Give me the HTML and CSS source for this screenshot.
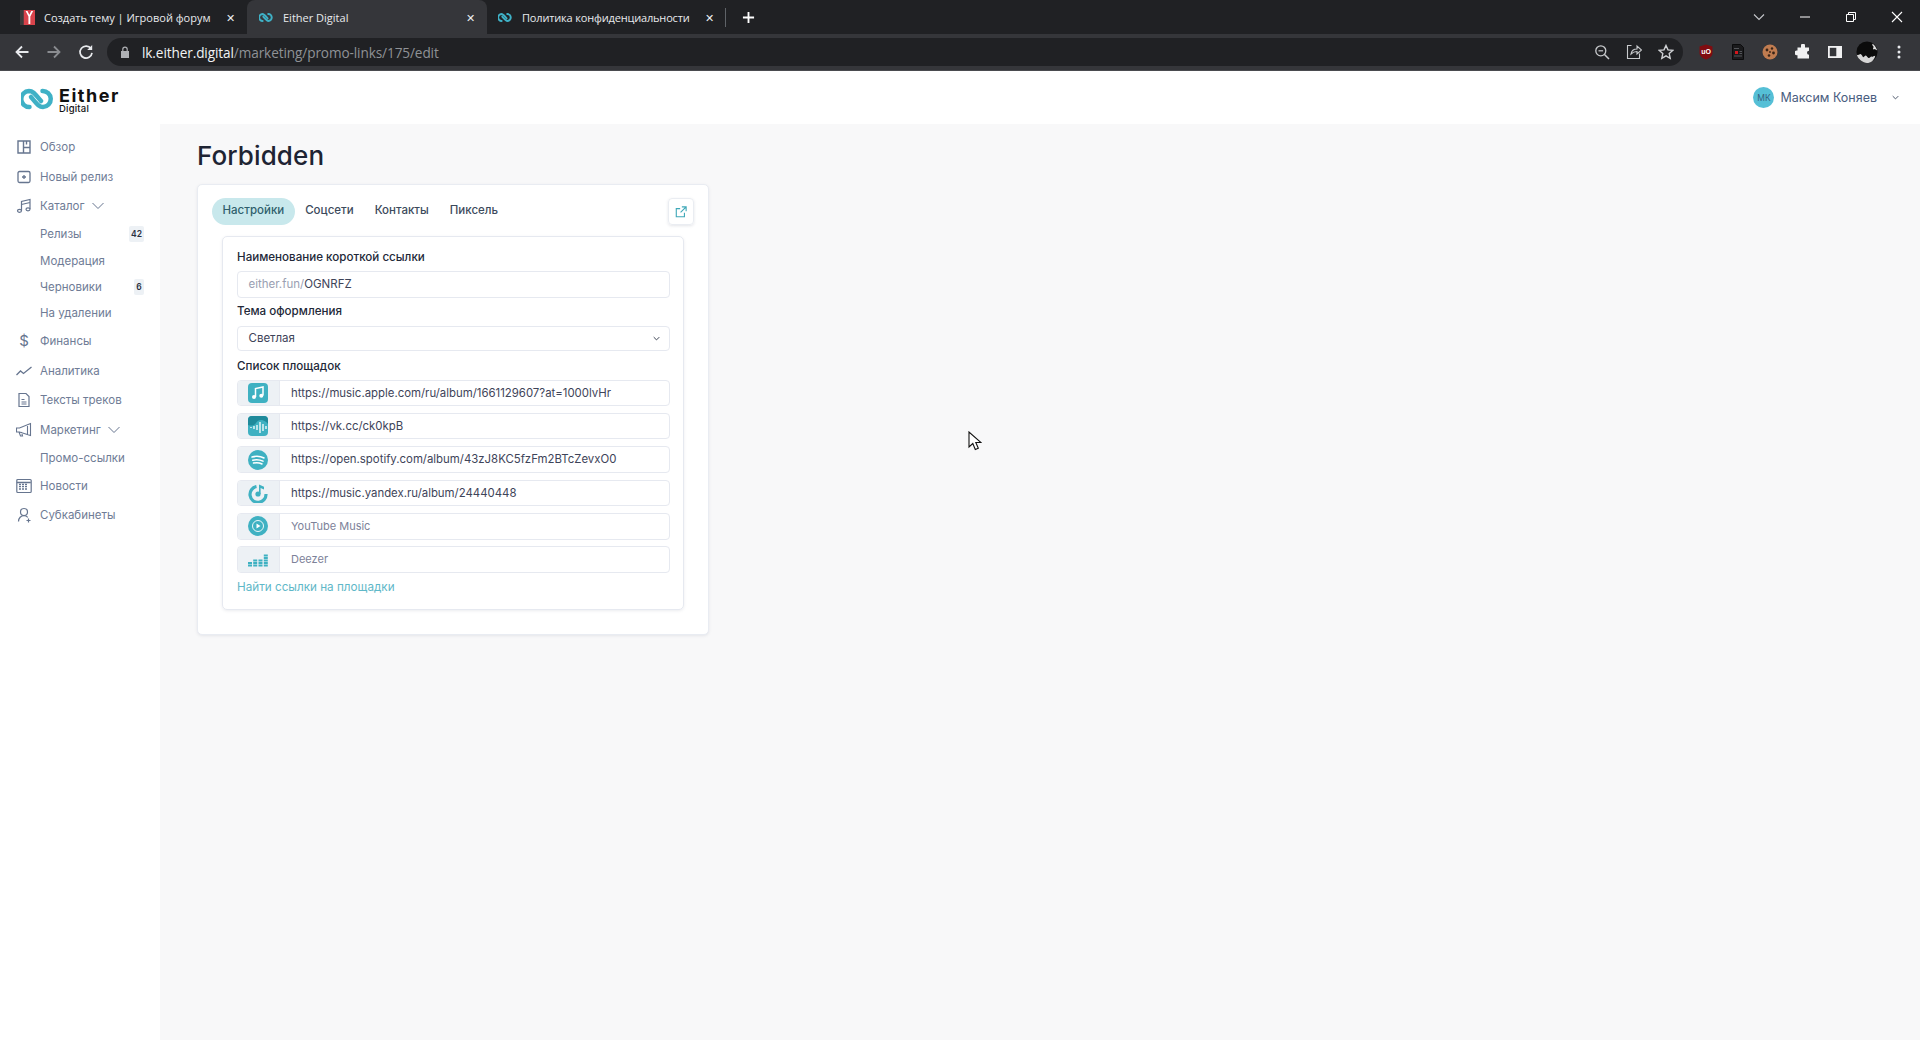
FILE: index.html
```html
<!DOCTYPE html>
<html lang="ru">
<head>
<meta charset="utf-8">
<title>Either Digital</title>
<link rel="stylesheet" href="styles.css">
</head>
<body>
<svg class="defs" width="0" height="0"><defs>
<g id="either" fill="none" stroke="#3fb1c6" stroke-width="4.500" stroke-linecap="round"><path d="M28.500 47A8 8 0 0 1 28 31C32 31 34 34 40 41"/><path d="M41.500 31A8 8 0 0 1 42 47C38 47 36 44 30 37"/></g>
</defs></svg>
<div class="tabstrip">
  <div class="tab tab-first">
    <svg class="fav" viewBox="0 0 16 16"><rect width="16" height="16" fill="#3a3a3a"/><rect x="4" width="12" height="16" fill="#d8434b"/><path d="M6 1l3 6v8h2V7l3-6h-2L10 5 8 1z" fill="#fff"/></svg>
    <span class="tab-title">Создать тему | Игровой форум</span>
    <span class="tab-x">✕</span>
  </div>
  <div class="tab tab-active">
    <svg class="fav" viewBox="20 25 35 28"><use href="#either"/></svg>
    <span class="tab-title">Either Digital</span>
    <span class="tab-x">✕</span>
  </div>
  <div class="tab tab-third">
    <svg class="fav" viewBox="20 25 35 28"><use href="#either"/></svg>
    <span class="tab-title">Политика конфиденциальности</span>
    <span class="tab-x">✕</span>
  </div>
  <div class="tab-sep"></div>
  <svg class="newtab" viewBox="0 0 14 14"><path d="M7 1v12M1 7h12" stroke="#fff" stroke-width="2"/></svg>
  <div class="win">
    <svg viewBox="0 0 14 14" class="w-chev"><path d="M2 4.500l5 5 5-5" fill="none" stroke="#c6c8cc" stroke-width="1.100"/></svg>
    <svg viewBox="0 0 14 14"><path d="M2 7h10" stroke="#fff" stroke-width="1"/></svg>
    <svg viewBox="0 0 14 14"><path d="M2.500 4.500h7v7h-7zM4.500 4.500v-2h7v7h-2" fill="none" stroke="#fff"/></svg>
    <svg viewBox="0 0 14 14"><path d="M2 2l10 10M12 2L2 12" stroke="#fff" stroke-width="1.100"/></svg>
  </div>
</div>
<div class="toolbar">
  <svg class="nav-ic" viewBox="0 0 16 16"><path d="M14.500 8H2.500M8 2.500L2.500 8 8 13.500" fill="none" stroke="#e8eaed" stroke-width="1.800"/></svg>
  <svg class="nav-ic" viewBox="0 0 16 16"><path d="M1.500 8h12M8 2.500L13.500 8 8 13.500" fill="none" stroke="#8a8c90" stroke-width="1.800"/></svg>
  <svg class="nav-ic" viewBox="0 0 16 16"><path d="M13 4.700A6 6 0 1 0 14 8.800" fill="none" stroke="#e8eaed" stroke-width="1.700"/><path d="M14.200 1v5h-5z" fill="#e8eaed"/></svg>
  <div class="omnibox">
    <svg class="lock" viewBox="0 0 10 12"><path d="M1 5h8v7H1z" fill="#aeb0b4"/><path d="M2.800 5V3.300a2.200 2.200 0 0 1 4.400 0V5" fill="none" stroke="#aeb0b4" stroke-width="1.200"/></svg>
    <span class="url"><span class="url-host">lk.either.digital</span>/marketing/promo-links/175/edit</span>
    <div class="omni-right">
      <svg viewBox="0 0 16 16"><circle cx="6.800" cy="6.800" r="5" fill="none" stroke="#c8cacd" stroke-width="1.300"/><path d="M10.500 10.500L15 15" stroke="#c8cacd" stroke-width="1.500"/><path d="M4.500 6.800h4.600" stroke="#c8cacd" stroke-width="1.200"/></svg>
      <svg viewBox="0 0 16 16"><path d="M5 1.500H1v13h12v-5" fill="none" stroke="#c8cacd" stroke-width="1.100" transform="translate(.5 0)"/><path d="M5 10c.5-3 3-5 6-5V2l4.500 4-4.500 4V7.500c-2.500 0-4.500 1-6 2.500z" fill="none" stroke="#c8cacd" stroke-width="1.100"/></svg>
      <svg viewBox="0 0 16 16"><path d="M8 1.500l2 4.400 4.800.5-3.600 3.200 1 4.700L8 11.900l-4.200 2.400 1-4.700L1.200 6.400 6 5.900z" fill="none" stroke="#d0d2d5" stroke-width="1.400"/></svg>
    </div>
  </div>
  <div class="ext">
    <svg viewBox="0 0 16 16"><path d="M8 .5l6.500 2v6.500c0 3-3 5.500-6.500 6.500C4.500 14.500 1.500 12 1.500 9V2.500z" fill="#800c10"/><text x="8" y="9.800" class="ub">uO</text></svg>
    <svg viewBox="0 0 16 16"><path d="M2.500.5h8l3 3v12h-11z" fill="#1a1a1c" stroke="#0b0b0c"/><rect x="5" y="7" width="3" height="3" fill="#d4161c"/><path d="M4 4.500h5M9.500 7.500h2.500M9.500 9.500h2.500M4 12h8" stroke="#55565a"/></svg>
    <svg viewBox="0 0 16 16"><circle cx="8" cy="8" r="7.500" fill="#c07c50"/><circle cx="5" cy="6" r="1.400" fill="#3a2417"/><circle cx="10" cy="4.500" r="1.200" fill="#3a2417"/><circle cx="11.500" cy="9" r="1.400" fill="#3a2417"/><circle cx="7" cy="11.500" r="1.300" fill="#3a2417"/><circle cx="8" cy="8" r=".9" fill="#3a2417"/></svg>
    <svg viewBox="0 0 16 16"><path d="M6 1.500a2 2 0 0 1 4 0V3.500h4v3.300a2 2 0 0 0 0 4V14.500H2.500v-3.300h-.7a2.300 2.300 0 0 1 0-4.600h.7V3.500H6z" fill="#f1f1f2"/></svg>
    <svg viewBox="0 0 16 16"><rect x="1" y="2" width="14" height="12" fill="#f1f1f2"/><rect x="2.800" y="3.800" width="6.500" height="8.400" fill="#35363a"/></svg>
    <svg class="ext-av" viewBox="0 0 24 24"><circle cx="12" cy="12" r="11.500" fill="#0b0b0b"/><path d="M1 15c3 1 3-2 5 0s1 4 3 2 2-1 4 1 3-2 4-1 2-1 4-1c-1 5-5 8-9 8S2 20 1 15z" fill="#d5d5d5"/><path d="M18 3c2 1 4 4 5 7-2 0-2-2-3-1s-2-1-1-2-2-2-1-4z" fill="#e2e2e2"/></svg>
    <svg class="ext-menu" viewBox="0 0 16 16"><circle cx="8" cy="3" r="1.500" fill="#e8eaed"/><circle cx="8" cy="8" r="1.500" fill="#e8eaed"/><circle cx="8" cy="13" r="1.500" fill="#e8eaed"/></svg>
  </div>
</div>
<div class="app">
  <aside class="sidebar">
    <div class="logo">
      <svg class="logo-mark" viewBox="20 27 35 24"><use href="#either"/></svg>
      <div class="logo-text"><span class="logo-name">Either</span><span class="logo-sub">Digital</span></div>
    </div>
    <nav class="nav">
      <a class="nav-item"><svg class="n-ic" viewBox="0 0 16 16"><path d="M2 2h12v12H2zM7.500 2v12M7.500 8.500H14M10.500 2v3.500" fill="none" stroke="#66758f" stroke-width="1.400"/></svg>Обзор</a>
      <a class="nav-item"><svg class="n-ic" viewBox="0 0 16 16"><rect x="2" y="2.500" width="12" height="11" rx="1.500" fill="none" stroke="#66758f" stroke-width="1.300"/><path d="M8 6v4M6 8h4" stroke="#66758f" stroke-width="1.300"/></svg>Новый релиз</a>
      <a class="nav-item"><svg class="n-ic" viewBox="0 0 16 16"><path d="M5.500 12.500V3.500L14 1.500V11M5.500 6.500L14 4.500" fill="none" stroke="#66758f" stroke-width="1.200"/><ellipse cx="3.500" cy="12.800" rx="2" ry="1.500" fill="none" stroke="#66758f" stroke-width="1.200"/><ellipse cx="12" cy="11.300" rx="2" ry="1.500" fill="none" stroke="#66758f" stroke-width="1.200"/></svg>Каталог<svg class="n-chev" viewBox="0 0 12 8"><path d="M.5 1l5.500 5.500L11.500 1" fill="none" stroke="#66758f"/></svg></a>
      <a class="nav-sub">Релизы<span class="badge badge-wide">42</span></a>
      <a class="nav-sub">Модерация</a>
      <a class="nav-sub">Черновики<span class="badge">6</span></a>
      <a class="nav-sub">На удалении</a>
      <a class="nav-item"><span class="n-ic n-dollar">$</span>Финансы</a>
      <a class="nav-item"><svg class="n-ic" viewBox="0 0 16 16"><path d="M.5 12l4-4 3 2.500L15.500 4" fill="none" stroke="#66758f" stroke-width="1.300"/></svg>Аналитика</a>
      <a class="nav-item"><svg class="n-ic" viewBox="0 0 16 16"><path d="M3 1.500h7l3 3v10H3zM5.500 7.500h3M5.500 10h5M5.500 12h5" fill="none" stroke="#66758f" stroke-width="1.200"/></svg>Тексты треков</a>
      <a class="nav-item"><svg class="n-ic" viewBox="0 0 16 16"><path d="M.5 6h3l11-4.500v12L3.500 10h-3zM11.500 2.500v10M3 10l1.500 4h2L5.500 10" fill="none" stroke="#66758f" stroke-width="1.100"/></svg>Маркетинг<svg class="n-chev" viewBox="0 0 12 8"><path d="M.5 1l5.500 5.500L11.500 1" fill="none" stroke="#66758f"/></svg></a>
      <a class="nav-sub">Промо-ссылки</a>
      <a class="nav-item"><svg class="n-ic" viewBox="0 0 16 16"><rect x=".8" y="1.500" width="14.400" height="13" rx="1" fill="none" stroke="#66758f" stroke-width="1.200"/><path d="M.8 4.500h14" stroke="#66758f" stroke-width="1.500"/><path d="M3 6.500h9M3 8.700h9M3 11h9" stroke="#66758f" stroke-width="1.300" stroke-dasharray="2 1"/></svg>Новости</a>
      <a class="nav-item"><svg class="n-ic" viewBox="0 0 16 16"><circle cx="8" cy="5" r="3.500" fill="none" stroke="#66758f" stroke-width="1.200"/><path d="M2.500 14.500c0-3.500 2.500-5.800 5.500-5.800 1.500 0 2.800.6 3.800 1.600M12.500 11.500v4M10.500 13.500h4" fill="none" stroke="#66758f" stroke-width="1.200"/></svg>Субкабинеты</a>
    </nav>
  </aside>
  <div class="main">
    <header class="topbar">
      <span class="avatar">МК</span>
      <span class="user-name">Максим Коняев</span>
      <svg class="user-chev" viewBox="0 0 10 6"><path d="M1 1l4 4 4-4" fill="none" stroke="#4a5568" stroke-width="1.400"/></svg>
    </header>
    <main class="content">
      <h1 class="title">Forbidden</h1>
      <section class="card">
        <div class="tabs">
          <a class="pill pill-on">Настройки</a>
          <a class="pill">Соцсети</a>
          <a class="pill">Контакты</a>
          <a class="pill">Пиксель</a>
          <a class="ext-btn"><svg viewBox="0 0 14 14"><path d="M11 8v4.500H1.500V3H6M8 1h5v5M13 1L6.500 7.500" fill="none" stroke="#3fa8b8" stroke-width="1.300"/></svg></a>
        </div>
        <div class="panel">
          <label class="lbl">Наименование короткой ссылки</label>
          <div class="field"><span class="muted">either.fun/</span>OGNRFZ</div>
          <label class="lbl lbl-theme">Тема оформления</label>
          <div class="field field-select">Светлая<svg viewBox="0 0 10 6"><path d="M1 1l4 4 4-4" fill="none" stroke="#3a4252" stroke-width="1.400"/></svg></div>
          <label class="lbl lbl-list">Список площадок</label>
          <div class="row">
            <span class="pre"><svg viewBox="0 0 20 20"><rect width="20" height="20" rx="4" fill="#3fb1c2"/><path d="M7.500 14V5.500L15 4v8.500" fill="none" stroke="#fff" stroke-width="1.500"/><circle cx="6" cy="14" r="2" fill="#fff"/><circle cx="13.300" cy="12.700" r="2" fill="#fff"/></svg></span>
            <span class="val">https://music.apple.com/ru/album/1661129607?at=1000lvHr</span>
          </div>
          <div class="row">
            <span class="pre"><svg viewBox="0 0 20 20"><rect width="20" height="20" rx="4" fill="#3fb1c2"/><path d="M0 9V4a4 4 0 0 1 4-4h12a4 4 0 0 1 4 4v4C15 2 10 4 8 7S3 10 0 9z" fill="#1f8a9b"/><path d="M3 11v1M6 10v3M9 9v5M12 6v11M15 8v7M18 10v3" stroke="#fff" stroke-width="1.300"/></svg></span>
            <span class="val">https://vk.cc/ck0kpB</span>
          </div>
          <div class="row">
            <span class="pre"><svg viewBox="0 0 20 20"><circle cx="10" cy="10" r="10" fill="#3fb1c2"/><path d="M4 7c4-1 8.500-.8 12 1M4.700 10.200c3.500-.8 7.300-.5 10.300 1M5.500 13c3-.6 6-.4 8.500 1" fill="none" stroke="#fff" stroke-width="1.500" stroke-linecap="round"/></svg></span>
            <span class="val">https://open.spotify.com/album/43zJ8KC5fzFm2BTcZevxO0</span>
          </div>
          <div class="row">
            <span class="pre"><svg viewBox="0 0 20 20"><path d="M8.500 3.500A8 8 0 1 0 18 11" fill="none" stroke="#3fb1c2" stroke-width="3.200"/><circle cx="10" cy="11" r="2.600" fill="#3fb1c2"/><path d="M11 11V1.500l5 2.300V6.500L12.600 5v6z" fill="#3fb1c2"/></svg></span>
            <span class="val">https://music.yandex.ru/album/24440448</span>
          </div>
          <div class="row">
            <span class="pre"><svg viewBox="0 0 20 20"><circle cx="10" cy="10" r="10" fill="#3fb1c2"/><circle cx="10" cy="10" r="5.500" fill="none" stroke="#fff" stroke-width=".9"/><path d="M8.500 7.500l4 2.500-4 2.500z" fill="#fff"/></svg></span>
            <span class="val val-empty">YouTube Music</span>
          </div>
          <div class="row">
            <span class="pre"><svg viewBox="0 0 20 20"><g fill="#3fb1c2"><rect y="14.500" width="4" height="2"/><rect y="12" width="4" height="2"/><rect x="5.200" y="14.500" width="4" height="2"/><rect x="5.200" y="12" width="4" height="2"/><rect x="5.200" y="9.500" width="4" height="2"/><rect x="10.500" y="14.500" width="4" height="2"/><rect x="10.500" y="12" width="4" height="2"/><rect x="10.500" y="9.500" width="4" height="2"/><rect x="15.800" y="14.500" width="4" height="2"/><rect x="15.800" y="12" width="4" height="2"/><rect x="15.800" y="9.500" width="4" height="2"/><rect x="15.800" y="7" width="4" height="2"/><rect x="15.800" y="4.500" width="4" height="2"/></g></svg></span>
            <span class="val val-empty">Deezer</span>
          </div>
          <a class="find">Найти ссылки на площадки</a>
        </div>
      </section>
    </main>
  </div>
</div>
<svg class="cursor" viewBox="0 0 14 20"><path d="M1 1v15l3.800-3.500 2.500 6 3-1.200-2.500-5.800H13z" fill="#fff" stroke="#111" stroke-width="1.100"/></svg>
</body>
</html>
```
FILE: styles.css
```css
* { box-sizing: border-box; }
html, body { margin: 0; height: 100%; }
body { overflow: hidden; font-family: Inter, "Noto Sans", sans-serif; background: #f8f8f9; color: #2a3042; display: flex; flex-direction: column; }
a { display: block; }
.defs { position: absolute; }

.tabstrip { height: 34px; background: #202124; display: flex; align-items: stretch; font-family: "Open Sans", "Noto Sans", sans-serif; font-size: 11px; color: #e8eaed; flex: none; }
.tab { display: flex; align-items: center; position: relative; }
.tab-first { width: 247px; padding-left: 20px; }
.tab-active { width: 240px; padding-left: 12px; background: #35363a; border-radius: 8px 8px 0 0; }
.tab-third { width: 238px; padding-left: 11px; }
.fav { width: 15px; height: 15px; flex: none; margin-right: 9px; }
.tab-title { flex: 1; white-space: nowrap; overflow: hidden; min-width: 0; }
.tab-third .tab-title { letter-spacing: -.17px; }
.tab-x { width: 24px; font-size: 11px; text-align: center; color: #eceef0; margin-left: 4px; margin-right: 5px; flex: none; }
.tab-third .tab-x { margin-left: 0; margin-right: 4px; }
.tab-sep { width: 1px; height: 19px; background: #5f6368; align-self: center; }
.newtab { width: 13px; height: 13px; align-self: center; margin-left: 16px; }
.win { margin-left: auto; display: flex; align-items: center; gap: 32px; padding-right: 16px; }
.win svg { width: 14px; height: 14px; }

.toolbar { height: 37px; background: #35363a; border-bottom: 1px solid #4a4b4f; display: flex; align-items: center; flex: none; padding-left: 14px; }
.nav-ic { width: 16px; height: 16px; margin-right: 16px; flex: none; }
.omnibox { width: 1576px; height: 28px; margin-left: -3px; background: #202124; border-radius: 14px; display: flex; align-items: center; padding-left: 13px; }
.lock { width: 10px; height: 12px; margin-right: 12px; }
.url { font-family: "Open Sans", "Noto Sans", sans-serif; font-size: 13.600px; color: #8f9296; letter-spacing: -.1px; }
.url-host { color: #f1f3f4; }
.omni-right { margin-left: auto; display: flex; gap: 16px; padding-right: 9px; }
.omni-right svg { width: 16px; height: 16px; }
.ext { display: flex; align-items: center; gap: 16.200px; padding-left: 15px; }
.ext svg { width: 16px; height: 16px; }
.ext .ext-av { width: 22px; height: 22px; margin: 0 -3px; }
.ub { font: 700 7px "Liberation Sans", sans-serif; fill: #fff; text-anchor: middle; }

.app { flex: 1; display: flex; min-height: 0; }
.sidebar { width: 160px; background: #fff; flex: none; }
.logo { height: 61.500px; padding: 15px 0 0 21px; display: flex; }
.logo-mark { width: 35px; height: 24px; margin-top: 1px; }
.logo-text { margin-left: 3px; display: flex; flex-direction: column; color: #111; }
.logo-name { font: 700 18px/20px Inter, sans-serif; letter-spacing: 1.500px; }
.logo-sub { font: 500 9.500px/10px Inter, sans-serif; letter-spacing: .2px; margin-top: -2px; }
.nav { color: #6f7c96; font-size: 11.500px; }
.nav-item { height: 29.500px; display: flex; align-items: center; padding-left: 16px; }
.n-ic { width: 16px; height: 16px; margin-right: 8px; flex: none; }
.n-dollar { color: #66758f; font-size: 15px; font-weight: 400; text-align: center; line-height: 16px; }
.n-chev { width: 12px; height: 8px; margin-left: 7px; }
.nav-sub { height: 26.400px; display: flex; align-items: center; padding: 0 16px 0 40px; justify-content: space-between; }
.badge { background: #edf1f5; color: #2a3042; font-size: 8.500px; font-weight: 600; height: 16px; width: 10px; border-radius: 2px; display: flex; align-items: center; justify-content: center; }
.badge-wide { width: 15px; }

.main { flex: 1; display: flex; flex-direction: column; min-width: 0; }
.topbar { height: 53px; background: #fff; display: flex; align-items: center; padding-right: 21px; justify-content: flex-end; }
.avatar { width: 21px; height: 21px; border-radius: 50%; background: #55bfd6; color: #35607e; font-size: 8.500px; display: flex; align-items: center; justify-content: center; margin-right: 6px; }
.user-name { color: #4a5d80; font-size: 12.500px; }
.user-chev { width: 7px; height: 5px; margin-left: 15px; }
.content { padding: 15px 0 0 37px; }
.title { margin: 0 0 11px; font-size: 26px; line-height: 34px; font-weight: 500; color: #1e2433; letter-spacing: .1px; }
.card { width: 512px; height: 451px; background: #fff; border: 1px solid #e9ecf2; border-radius: 5px; box-shadow: 0 1px 3px rgba(120,130,150,.15); padding: 13px 14px 0 14px; }
.tabs { display: flex; align-items: center; height: 27px; font-size: 11.500px; color: #3c4a5c; }
.pill { height: 27px; padding: 0 10.500px; border-radius: 14px; line-height: 24px; font-weight: 500; }
.pill-on { background: #c8e8ec; color: #2f5f6c; }
.ext-btn { margin-left: auto; width: 26px; height: 27px; border: 1px solid #eaedf2; border-radius: 4px; box-shadow: 0 1px 3px rgba(120,130,150,.2); display: flex; align-items: center; justify-content: center; }
.ext-btn svg { width: 12px; height: 12px; }
.panel { margin: 11px 10px 0 10px; height: 374px; border: 1px solid #e6e9f0; border-radius: 5px; box-shadow: 0 1px 3px rgba(120,130,150,.15); padding: 12px 13px 0 14px; }
.lbl { display: block; font-size: 11.600px; line-height: 16px; font-weight: 500; color: #222838; }
.field { height: 27px; margin-top: 6px; border: 1px solid #e6e9f0; border-radius: 4px; padding-left: 10.500px; font-size: 11.500px; line-height: 25px; color: #3e4459; }
.muted { color: #9aa0b2; }
.lbl-theme { margin-top: 5px; }
.field-select { height: 25.500px; margin-top: 6.500px; line-height: 23px; display: flex; justify-content: space-between; align-items: center; padding-right: 9px; }
.field-select svg { width: 7px; height: 5px; }
.lbl-list { margin-top: 6.500px; margin-bottom: 6px; }
.row { display: flex; height: 26.500px; margin-bottom: 6.900px; border: 1px solid #e6e9f0; border-radius: 4px; overflow: hidden; }
.pre { width: 42px; flex: none; background: #edf1f5; display: flex; align-items: center; justify-content: center; border-right: 1px solid #e6e9f0; padding-right: 2px; }
.pre svg { width: 20px; height: 20px; }
.val { padding-left: 11px; font-size: 11.400px; line-height: 24px; color: #3e4459; white-space: nowrap; }
.val-empty { color: #7d8299; font-size: 11px; }
.find { color: #5fb8c8; font-size: 11.700px; line-height: 16px; margin-top: -.5px; }
.cursor { position: absolute; left: 968px; top: 431px; width: 14px; height: 20px; }
```
